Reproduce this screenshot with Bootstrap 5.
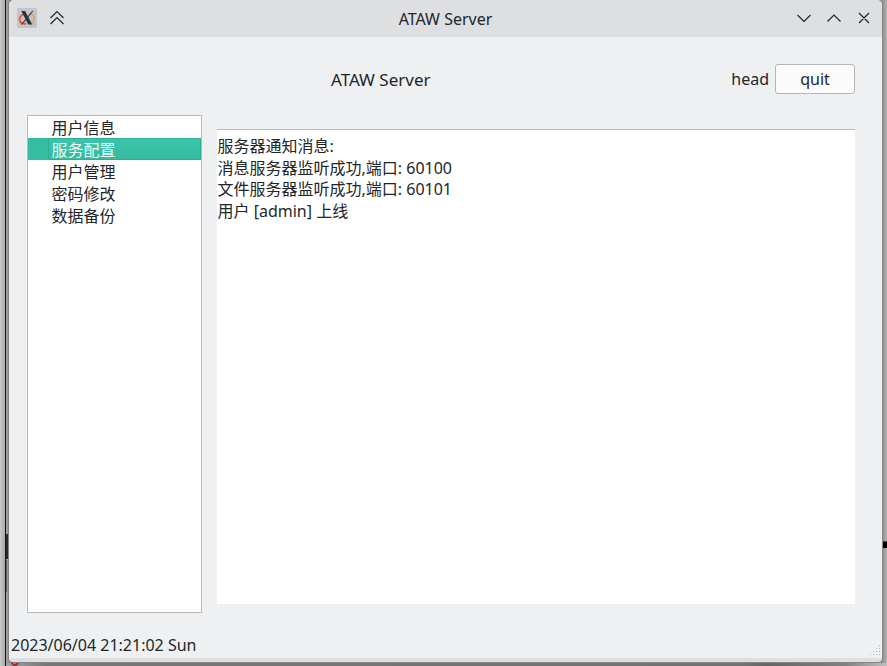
<!DOCTYPE html>
<html lang="zh-CN">
<head>
<meta charset="utf-8">
<title>ATAW Server</title>
<link href="https://cdn.jsdelivr.net/npm/bootstrap@5.3.0/dist/css/bootstrap.min.css" rel="stylesheet">
<style>
body{width:887px;height:666px;overflow:hidden;background:linear-gradient(90deg,#c8c8c8 0,#a9a9a9 5px,#8f8d8d 9px,#858485 860px,#8b8a8a 882px,#b4b3b2 887px);font:16px/22px "Noto Sans","Noto Sans CJK SC",sans-serif;color:#232629;position:relative}
.edge-line{left:5px;top:0;width:1px;height:666px;background:#161616}
.edge-dark{left:6px;top:534px;width:2px;height:25px;background:#292c2d}
.edge-grey{left:6px;top:560px;width:1px;height:32px;background:#666}
.edge-right{left:883px;top:541px;width:4px;height:7px;background:#000;border-top:1px solid #444}
.desk-floor{left:6px;top:663px;width:881px;height:3px;background:linear-gradient(90deg,#a5a5a5,#777678 40px,#727173 740px,#656466 760px,#828182 840px,#c0bfbf)}
.desk-red{left:11px;top:662px;width:8px;height:4px;border:2px solid #ad2928;border-top:0;border-radius:0 0 4px 4px}
.app-window{width:873px;height:662px;margin-left:9px;background:#eff0f1;border-bottom:4px solid #dedfe1;border-radius:5px 5px 4px 4px;overflow:hidden;box-shadow:0 0 0 1px #858585;position:relative}
.title-bar{height:37px;background:#dedfe1}
.title-side{width:195px;height:35px;align-self:flex-start}
.shade-icon{margin-left:12px}
.window-buttons{padding-right:9px}
.head-row{height:78px;padding:27px 27px 0 18px}
.head-title{padding-left:304px;padding-top:5px;font-size:17px}
.head-name{margin-right:6px}
.btn-quit{width:80px;height:30px;border:1px solid #b4b5b7;border-radius:3px;background:linear-gradient(#fcfcfc,#fafafa 50%,#fdfdfd);color:#232629;font-size:16px;line-height:26px}
.btn-quit:hover{border-color:#3daee9}
.main-row{height:498px;padding:0 27px 0 18px;gap:15px}
.side-list{width:175px;border:1px solid #b7b9bb;background:#fff;border-radius:0}
.side-list .list-group-item{height:22px;padding:0 0 0 23.5px;border:0;border-radius:0;color:#232629;line-height:25px;background:#fff}
.side-list .list-group-item.active{color:#eff9f6;background:linear-gradient(90deg,#34bda1 20px,transparent 20px),linear-gradient(#3ac6aa,#34baa0);margin:0;box-shadow:none}
.side-list .active::after{content:"";position:absolute;left:20px;top:0;right:0;bottom:0;border:1px solid #2dad94;border-radius:1px}
.log-pane{width:638px;height:475px;margin-top:14px;border-top:1px solid #b7b9bb;background:#fff;padding:6px 0 0 .5px;line-height:21.7px}
.status-row{height:45px;padding:21px 0 0 2px}
.size-grip{right:2px;bottom:2px}
</style>
<script src="https://cdn.jsdelivr.net/npm/bootstrap@5.3.0/dist/js/bootstrap.bundle.min.js"></script>
</head>
<body>
<div class="position-absolute desk-floor"></div>
<div class="position-absolute edge-line"></div>
<div class="position-absolute edge-dark"></div>
<div class="position-absolute edge-grey"></div>
<div class="position-absolute edge-right"></div>
<div class="position-absolute desk-red"></div>
<main class="app-window d-flex flex-column">
  <header class="title-bar d-flex align-items-center justify-content-between flex-shrink-0">
    <div class="title-side d-flex align-items-center ps-2">
      <svg width="20" height="20" viewBox="0 0 20 20">
        <rect width="20" height="20" rx="1" fill="#bfc7cc"/>
        <path d="M12 17H18V12Z" fill="#b2bcc2"/>
        <path d="M7.500 6C3.500 7 1.800 10.200 3 13c1.200 2.600 3.800 3 6 2.500" fill="none" stroke="#ee5a32" stroke-width="1.800"/>
        <path d="M9 15.500c5 .3 8.500-2.700 8.200-5.800C17 7.500 15 6.200 12 6.100" fill="none" stroke="#f2a04e" stroke-width="1.500"/>
        <path d="M4.200 3H8L15.200 16.500H11.400Z" fill="#2d3133"/>
        <path d="M15.800 3L10.500 9.300M9 11.300L4.400 16.500" stroke="#35393b" stroke-width="1.100"/>
      </svg>
      <svg class="shade-icon" width="16" height="16" viewBox="0 0 16 16" fill="none" stroke="#232629" stroke-width="1.200"><path d="M1.500 8L8 1.500 14.500 8M1.500 14L8 7.500l6.500 6.500"/></svg>
    </div>
    <div>ATAW Server</div>
    <div class="title-side window-buttons d-flex align-items-center justify-content-end">
      <svg width="78" height="16" viewBox="0 0 78 16" fill="none" stroke="#232629" stroke-width="1.200"><path d="M2.500 5L9 11.500 15.500 5M32.500 11.500L39 5l6.500 6.500M64 3l10 10M74 3L64 13"/></svg>
    </div>
  </header>
  <section class="head-row d-flex flex-shrink-0 align-items-start">
    <div class="head-title">ATAW Server</div>
    <div class="ms-auto d-flex align-items-center">
      <span class="head-name">head</span>
      <button type="button" class="btn btn-quit p-0">quit</button>
    </div>
  </section>
  <section class="main-row d-flex flex-shrink-0">
    <div class="list-group side-list flex-shrink-0">
      <a class="list-group-item">用户信息</a>
      <a class="list-group-item active">服务配置</a>
      <a class="list-group-item">用户管理</a>
      <a class="list-group-item">密码修改</a>
      <a class="list-group-item">数据备份</a>
    </div>
    <div class="log-pane flex-shrink-0">
      <div>服务器通知消息:</div>
      <div>消息服务器监听成功,端口: 60100</div>
      <div>文件服务器监听成功,端口: 60101</div>
      <div>用户 [admin] 上线</div>
    </div>
  </section>
  <footer class="status-row">2023/06/04 21:21:02 Sun</footer>
  <svg class="position-absolute size-grip" width="11" height="11" viewBox="0 0 11 11" fill="#b5b6b8"><path d="M10 0h1v1h-1zM7 3h1v1H7zM10 3h1v1h-1zM4 6h1v1H4zM7 6h1v1H7zM10 6h1v1h-1zM1 9h1v1H1zM4 9h1v1H4zM7 9h1v1H7zM10 9h1v1h-1z"/></svg>
</main>
</body>
</html>
